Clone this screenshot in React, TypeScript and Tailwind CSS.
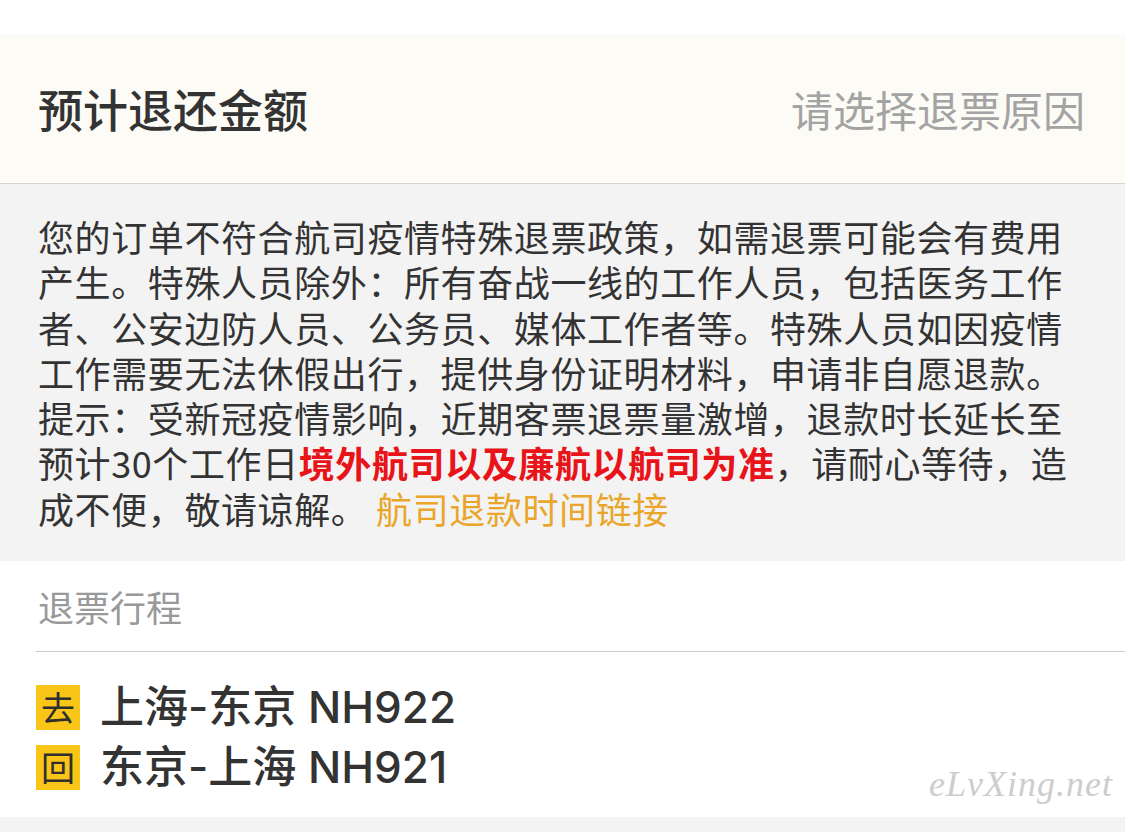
import React from 'react';

const cjk = { fontFamily: '"Noto Sans CJK SC", "Noto Sans", sans-serif' };
const mixed = { fontFamily: 'Inter, "Noto Sans CJK SC", sans-serif' };

function TripRow({ tag, route }: { tag: string; route: string }) {
  return (
    <div className="flex items-center h-[60px]">
      <div className="w-[44px] h-[45px] bg-[#f9c517] flex items-center justify-center text-[34px] leading-none text-[#2f2f2f]">
        {tag}
      </div>
      <div className="ml-[20px] text-[44px] leading-none font-medium text-[#333333]" style={mixed}>
        {route}
      </div>
    </div>
  );
}

export default function App() {
  return (
    <div className="w-[1125px] h-[832px] bg-white overflow-hidden flex flex-col" style={cjk}>
      <div className="h-[34px] bg-white" />

      {/* header */}
      <div className="h-[150px] bg-[#fcfbf5] border-b border-[#d4d4d4] flex items-center justify-between pl-[38px] pr-[40px]">
        <div className="text-[45px] font-medium text-[#333333] leading-none">预计退还金额</div>
        <div className="text-[42px] text-[#a3a3a3] leading-none">请选择退票原因</div>
      </div>

      {/* notice */}
      <div className="bg-[#f3f3f3] px-[38px] pt-[30px] pb-[30px]">
        <p className="text-[36px] leading-[45.3px] tracking-[0.6px] text-[#333333]">
          您的订单不符合航司疫情特殊退票政策，如需退票可能会有费用产生。特殊人员除外：所有奋战一线的工作人员，包括医务工作者、公安边防人员、公务员、媒体工作者等。特殊人员如因疫情工作需要无法休假出行，提供身份证明材料，申请非自愿退款。提示：受新冠疫情影响，近期客票退票量激增，退款时长延长至预计30个工作日<span className="text-[#e8141a] font-bold">境外航司以及廉航以航司为准</span>，请耐心等待，造成不便，敬请谅解。 <span className="text-[#e9a62a]">航司退款时间链接</span>
        </p>
      </div>

      {/* trip */}
      <div className="flex-1 bg-white relative flex flex-col">
        <div className="pl-[38px] h-[90px] flex items-center">
          <div className="text-[36px] text-[#999999] leading-none">退票行程</div>
        </div>
        <div className="ml-[36px] border-t border-[#cccccc]" />
        <div className="pl-[36px] pt-[25px] flex flex-col">
          <TripRow tag="去" route="上海-东京 NH922" />
          <TripRow tag="回" route="东京-上海 NH921" />
        </div>
        <div
          className="absolute right-[12px] bottom-[6px] text-[36px] italic text-[#cdcdcd] tracking-[1px]"
          style={{ fontFamily: '"Liberation Serif", serif' }}
        >
          eLvXing.net
        </div>
      </div>

      <div className="h-[15px] bg-[#f3f3f3]" />
    </div>
  );
}
